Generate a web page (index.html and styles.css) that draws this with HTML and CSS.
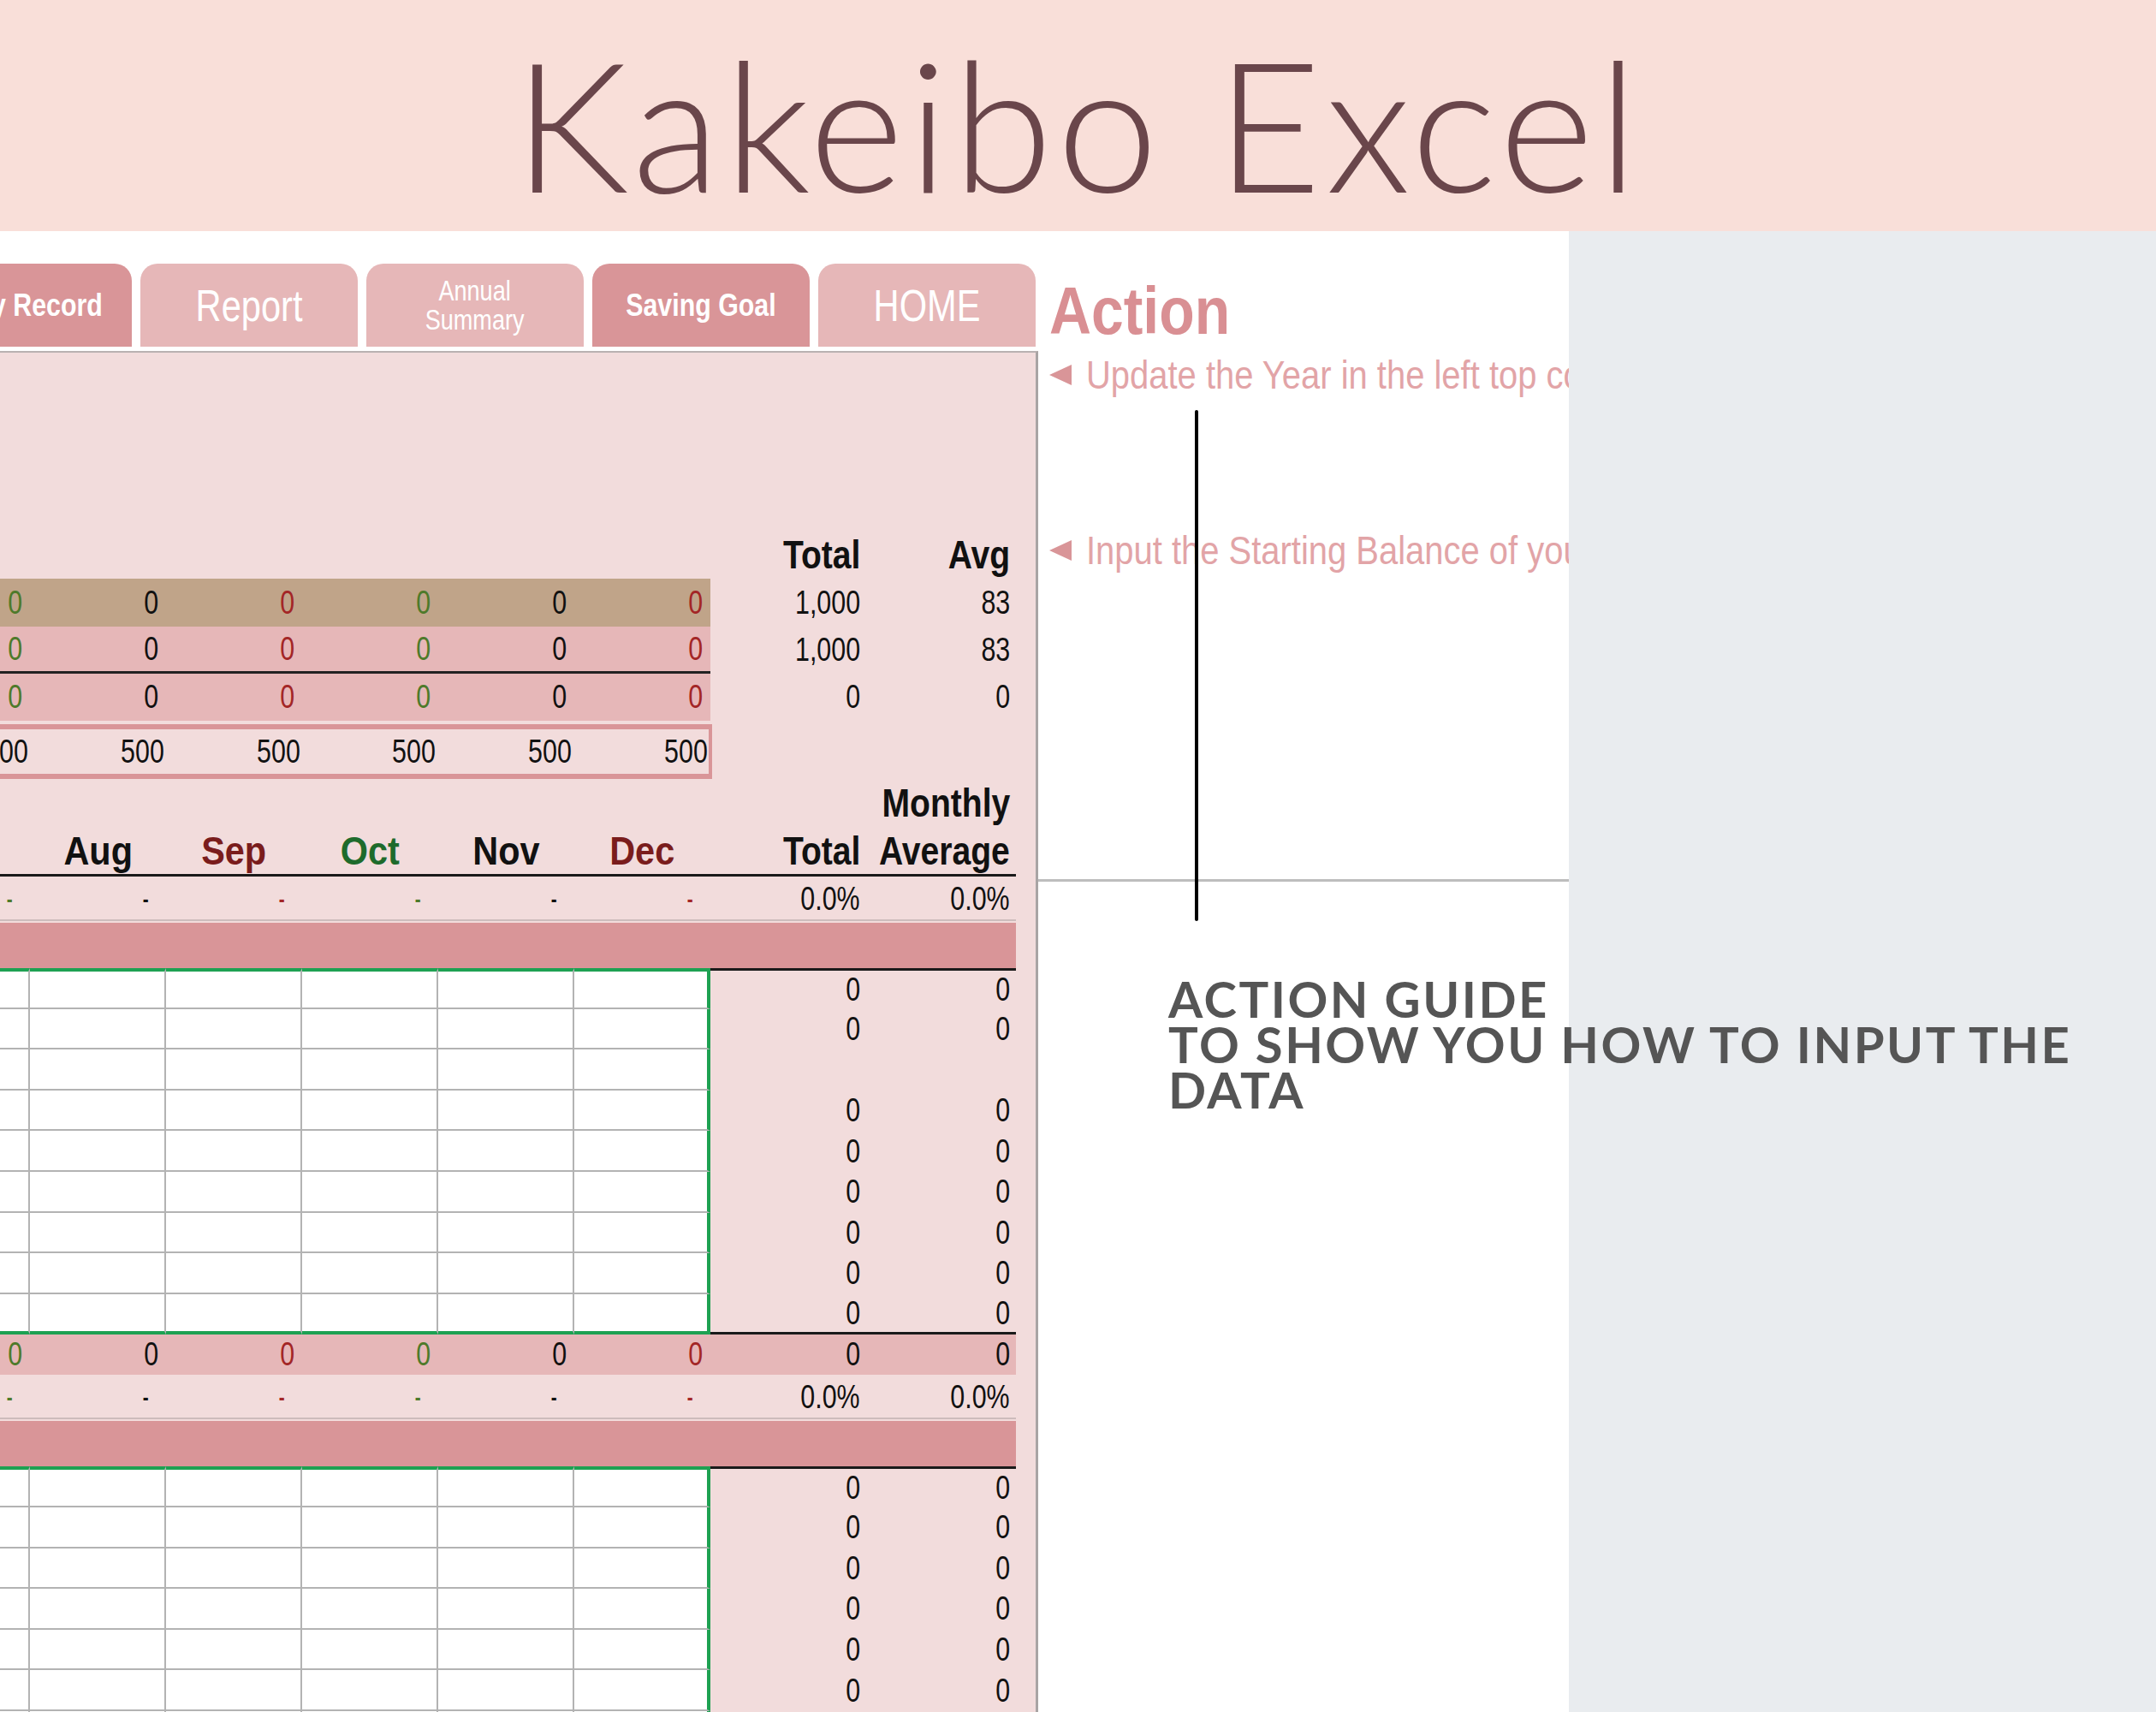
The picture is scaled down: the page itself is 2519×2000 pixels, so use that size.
FILE: index.html
```html
<!DOCTYPE html>
<html lang="en">
<head>
<meta charset="utf-8">
<title>Kakeibo Excel</title>
<link rel="stylesheet" href="styles.css">
</head>
<body>
<header class="banner"><h1>Kakeibo Excel</h1></header>
<main class="stage">
  <section class="canvas">
    <div class="sheet">
      <nav class="tabs">
        <div class="tab dark bold"><span>Daily Record</span></div>
        <div class="tab light big"><span>Report</span></div>
        <div class="tab light small"><span>Annual<br>Summary</span></div>
        <div class="tab dark bold"><span>Saving Goal</span></div>
        <div class="tab light big"><span>HOME</span></div>
      </nav>
      <div class="panel">
        <div class="ledger">
          <div class="row head">
            <div></div><div></div><div></div><div></div><div></div><div></div>
            <div class="t"><span>Total</span></div><div class="t"><span>Avg</span></div>
          </div>
          <div class="row tan">
            <div class="m g"><span>0</span></div><div class="m k"><span>0</span></div><div class="m r"><span>0</span></div><div class="m g"><span>0</span></div><div class="m k"><span>0</span></div><div class="m r"><span>0</span></div>
            <div class="t"><span>1,000</span></div><div class="t"><span>83</span></div>
          </div>
          <div class="row pink ruled">
            <div class="m g"><span>0</span></div><div class="m k"><span>0</span></div><div class="m r"><span>0</span></div><div class="m g"><span>0</span></div><div class="m k"><span>0</span></div><div class="m r"><span>0</span></div>
            <div class="t"><span>1,000</span></div><div class="t"><span>83</span></div>
          </div>
          <div class="row pink">
            <div class="m g"><span>0</span></div><div class="m k"><span>0</span></div><div class="m r"><span>0</span></div><div class="m g"><span>0</span></div><div class="m k"><span>0</span></div><div class="m r"><span>0</span></div>
            <div class="t"><span>0</span></div><div class="t"><span>0</span></div>
          </div>
          <div class="row boxed">
            <div class="box">
              <span>500</span><span>500</span><span>500</span><span>500</span><span>500</span><span>500</span>
            </div>
            <div class="t"></div><div class="t"></div>
          </div>
          <div class="row label">
            <div></div><div></div><div></div><div></div><div></div><div></div>
            <div class="t"></div><div class="t"><span>Monthly</span></div>
          </div>
          <div class="row months">
            <div class="mh g2"><span>Jul</span></div><div class="mh"><span>Aug</span></div><div class="mh r2"><span>Sep</span></div><div class="mh g2"><span>Oct</span></div><div class="mh"><span>Nov</span></div><div class="mh r2"><span>Dec</span></div>
            <div class="t"><span>Total</span></div><div class="t"><span>Average</span></div>
          </div>
          <div class="row dash">
            <div class="m g"><span>-</span></div><div class="m k"><span>-</span></div><div class="m r"><span>-</span></div><div class="m g"><span>-</span></div><div class="m k"><span>-</span></div><div class="m r"><span>-</span></div>
            <div class="t"><span>0.0%</span></div><div class="t"><span>0.0%</span></div>
          </div>
          <div class="band"></div>
          <div class="block">
            <div class="row entry"><div class="cell"></div><div class="cell"></div><div class="cell"></div><div class="cell"></div><div class="cell"></div><div class="cell"></div><div class="t"><span>0</span></div><div class="t"><span>0</span></div></div>
            <div class="row entry"><div class="cell"></div><div class="cell"></div><div class="cell"></div><div class="cell"></div><div class="cell"></div><div class="cell"></div><div class="t"><span>0</span></div><div class="t"><span>0</span></div></div>
            <div class="row entry"><div class="cell"></div><div class="cell"></div><div class="cell"></div><div class="cell"></div><div class="cell"></div><div class="cell"></div><div class="t"></div><div class="t"></div></div>
            <div class="row entry"><div class="cell"></div><div class="cell"></div><div class="cell"></div><div class="cell"></div><div class="cell"></div><div class="cell"></div><div class="t"><span>0</span></div><div class="t"><span>0</span></div></div>
            <div class="row entry"><div class="cell"></div><div class="cell"></div><div class="cell"></div><div class="cell"></div><div class="cell"></div><div class="cell"></div><div class="t"><span>0</span></div><div class="t"><span>0</span></div></div>
            <div class="row entry"><div class="cell"></div><div class="cell"></div><div class="cell"></div><div class="cell"></div><div class="cell"></div><div class="cell"></div><div class="t"><span>0</span></div><div class="t"><span>0</span></div></div>
            <div class="row entry"><div class="cell"></div><div class="cell"></div><div class="cell"></div><div class="cell"></div><div class="cell"></div><div class="cell"></div><div class="t"><span>0</span></div><div class="t"><span>0</span></div></div>
            <div class="row entry"><div class="cell"></div><div class="cell"></div><div class="cell"></div><div class="cell"></div><div class="cell"></div><div class="cell"></div><div class="t"><span>0</span></div><div class="t"><span>0</span></div></div>
            <div class="row entry last"><div class="cell"></div><div class="cell"></div><div class="cell"></div><div class="cell"></div><div class="cell"></div><div class="cell"></div><div class="t"><span>0</span></div><div class="t"><span>0</span></div></div>
          </div>
          <div class="row sum">
            <div class="m g"><span>0</span></div><div class="m k"><span>0</span></div><div class="m r"><span>0</span></div><div class="m g"><span>0</span></div><div class="m k"><span>0</span></div><div class="m r"><span>0</span></div>
            <div class="t"><span>0</span></div><div class="t"><span>0</span></div>
          </div>
          <div class="row dash">
            <div class="m g"><span>-</span></div><div class="m k"><span>-</span></div><div class="m r"><span>-</span></div><div class="m g"><span>-</span></div><div class="m k"><span>-</span></div><div class="m r"><span>-</span></div>
            <div class="t"><span>0.0%</span></div><div class="t"><span>0.0%</span></div>
          </div>
          <div class="band"></div>
          <div class="block">
            <div class="row entry"><div class="cell"></div><div class="cell"></div><div class="cell"></div><div class="cell"></div><div class="cell"></div><div class="cell"></div><div class="t"><span>0</span></div><div class="t"><span>0</span></div></div>
            <div class="row entry"><div class="cell"></div><div class="cell"></div><div class="cell"></div><div class="cell"></div><div class="cell"></div><div class="cell"></div><div class="t"><span>0</span></div><div class="t"><span>0</span></div></div>
            <div class="row entry"><div class="cell"></div><div class="cell"></div><div class="cell"></div><div class="cell"></div><div class="cell"></div><div class="cell"></div><div class="t"><span>0</span></div><div class="t"><span>0</span></div></div>
            <div class="row entry"><div class="cell"></div><div class="cell"></div><div class="cell"></div><div class="cell"></div><div class="cell"></div><div class="cell"></div><div class="t"><span>0</span></div><div class="t"><span>0</span></div></div>
            <div class="row entry"><div class="cell"></div><div class="cell"></div><div class="cell"></div><div class="cell"></div><div class="cell"></div><div class="cell"></div><div class="t"><span>0</span></div><div class="t"><span>0</span></div></div>
            <div class="row entry"><div class="cell"></div><div class="cell"></div><div class="cell"></div><div class="cell"></div><div class="cell"></div><div class="cell"></div><div class="t"><span>0</span></div><div class="t"><span>0</span></div></div>
            <div class="row entry"><div class="cell"></div><div class="cell"></div><div class="cell"></div><div class="cell"></div><div class="cell"></div><div class="cell"></div><div class="t"><span>0</span></div><div class="t"><span>0</span></div></div>
          </div>
        </div>
      </div>
    </div>
    <aside class="actions">
      <h2><span>Action</span></h2>
      <p class="hint first"><svg class="arrow" viewBox="0 0 26 24" width="26" height="24"><polygon points="26,0 26,24 0,12" fill="#d99598"/></svg><span>Update the Year in the left top corner</span></p>
      <p class="hint second"><svg class="arrow" viewBox="0 0 26 24" width="26" height="24"><polygon points="26,0 26,24 0,12" fill="#d99598"/></svg><span>Input the Starting Balance of your account</span></p>
      <div class="divider"></div>
    </aside>
  </section>
  <section class="backdrop"></section>
  <div class="pointer"></div>
  <p class="guide">ACTION GUIDE<br>TO SHOW YOU HOW TO INPUT THE<br>DATA</p>
</main>
</body>
</html>
```
FILE: styles.css
```css
:root {
  --sheet-font: "Liberation Sans", Arial, sans-serif;
  --tan: #c0a489;
  --pink: #e6b7b8;
  --rose: #d99598;
  --panel: #f2dcdc;
  --cols: repeat(6, 159px) 182px 175px;
}
* { box-sizing: border-box; margin: 0; padding: 0; }
html, body { width: 2519px; height: 2000px; overflow: hidden; background: #fff; }
body { font-family: "Liberation Sans", Arial, sans-serif; }

.banner { height: 270px; background: #f9dfd9; padding-top: 37px; text-align: center; }
.banner h1 {
  font-family: Lato, "Open Sans", sans-serif; font-weight: 300;
  font-size: 212px; line-height: 212px; letter-spacing: 5px; color: #6a464b;
}

.stage { position: relative; display: flex; height: 1730px; }
.canvas { width: 1833px; flex: none; display: flex; background: #fff; overflow: hidden; }
.backdrop { flex: 1; background: #e9ecef; }

.sheet { width: 1213px; flex: none; display: flex; flex-direction: column; }
.tabs { display: flex; gap: 10px; padding-top: 38px; margin-left: -100px; height: 135px; }
.tab {
  width: 254px; height: 97px; flex: none; border-radius: 20px 20px 0 0;
  display: flex; align-items: center; justify-content: center; text-align: center;
  color: #fff; font-family: var(--sheet-font);
}
.tab span { display: inline-block; transform: scaleX(0.82); white-space: nowrap; }
.tab.dark { background: var(--rose); }
.tab.light { background: var(--pink); }
.tab.bold { font-weight: 700; font-size: 37px; }
.tab.big { font-size: 52px; }
.tab.big span { transform: scaleX(0.8); }
.tab.small { font-size: 33px; line-height: 34px; }

.panel {
  margin-top: 5px; flex: 1; background: var(--panel);
  border-top: 2px solid #b9b1b1; border-right: 3px solid #a9a4a4;
  overflow: hidden; padding-top: 208px;
}
.ledger { margin-left: -124px; width: 1311px; font-family: var(--sheet-font); font-size: 38px; color: #111; }
.row { display: grid; grid-template-columns: var(--cols); }
.row > div { display: flex; align-items: center; justify-content: flex-end; padding-right: 9px; }
.row > .t { padding-right: 7px; }
.ledger span { display: inline-block; transform: scaleX(0.8); transform-origin: 100% 50%; white-space: nowrap; }

.g { color: #4e7a2a; }
.k { color: #111; }
.r { color: #a32626; }

.head { height: 56px; font-weight: 700; font-size: 46px; }
.head span, .label span, .months span { transform: scaleX(0.85); }
.tan { height: 56px; }
.tan .m { background: var(--tan); }
.pink { height: 55px; }
.pink .m { background: var(--pink); }
.ruled .m { border-bottom: 3px solid #222; }

.boxed { height: 64px; margin-top: 4px; }
.row > .box {
  grid-column: 1 / 7; margin-right: -2px; padding: 0;
  border: 6px solid var(--rose); border-left: none; border-right-width: 4px;
  display: grid; grid-template-columns: repeat(6, 1fr); align-items: center;
}
.box span { text-align: right; padding-right: 2px; justify-self: end; }

.label { height: 56px; font-weight: 700; font-size: 46px; }
.months { height: 58px; font-weight: 700; font-size: 46px; }
.months > div { border-bottom: 3px solid #1a1a1a; }
.months > .mh { justify-content: center; padding-right: 0; color: #111; }
.months > .mh span { transform-origin: 50% 50%; transform: scaleX(0.9); }
.months > .g2 { color: #1e6b2c; }
.months > .r2 { color: #7a1c1c; }

.dash { height: 52px; padding-top: 3px; border-bottom: 2px solid #cdbcbc; }
.dash .m { padding-right: 20px; font-weight: 700; font-size: 26px; }

.band { height: 53px; margin-top: 2px; background: var(--rose); }

.entry { height: 47.6px; }
.entry > .cell { background: #fff; border-right: 2px solid #b3b3b3; border-bottom: 2px solid #b3b3b3; }
.entry > .cell:nth-child(6) { border-right: 4px solid #1ea152; }
.entry:first-child > .cell { border-top: 4px solid #1ea152; }
.entry:first-child > .t { border-top: 3px solid #1a1a1a; }
.entry.last > .cell { border-bottom: 4px solid #1ea152; }
.entry.last > .t { border-bottom: 3px solid #1a1a1a; }

.sum { height: 47px; background: var(--pink); }

.actions { width: 620px; flex: none; overflow: hidden; padding-left: 13px; display: flex; flex-direction: column; }
.actions h2 {
  margin-top: 54px; font-family: var(--sheet-font); font-weight: 700;
  font-size: 78px; line-height: 78px; color: #d98f93; white-space: nowrap;
}
.actions h2 span { display: inline-block; transform: scaleX(0.87); transform-origin: 0 50%; }
.hint {
  display: flex; align-items: center; gap: 17px; white-space: nowrap;
  font-family: var(--sheet-font); font-size: 47px; line-height: 60px; color: #e2a4a7;
}
.hint span { display: inline-block; transform: scaleX(0.85); transform-origin: 0 50%; }
.hint.first { margin-top: 6px; }
.hint.second { margin-top: 145px; }
.arrow { flex: none; }
.divider { margin-top: 354px; margin-left: -13px; height: 3px; background: #bdbdbd; }

.pointer { position: absolute; left: 1396px; top: 209px; width: 4px; height: 597px; background: #000; border-radius: 2px; }
.guide {
  position: absolute; left: 1365px; top: 870px;
  font-family: Lato, "Open Sans", sans-serif; font-weight: 700;
  font-size: 58px; line-height: 53px; letter-spacing: 2.5px; color: #555;
  white-space: nowrap;
}
```
